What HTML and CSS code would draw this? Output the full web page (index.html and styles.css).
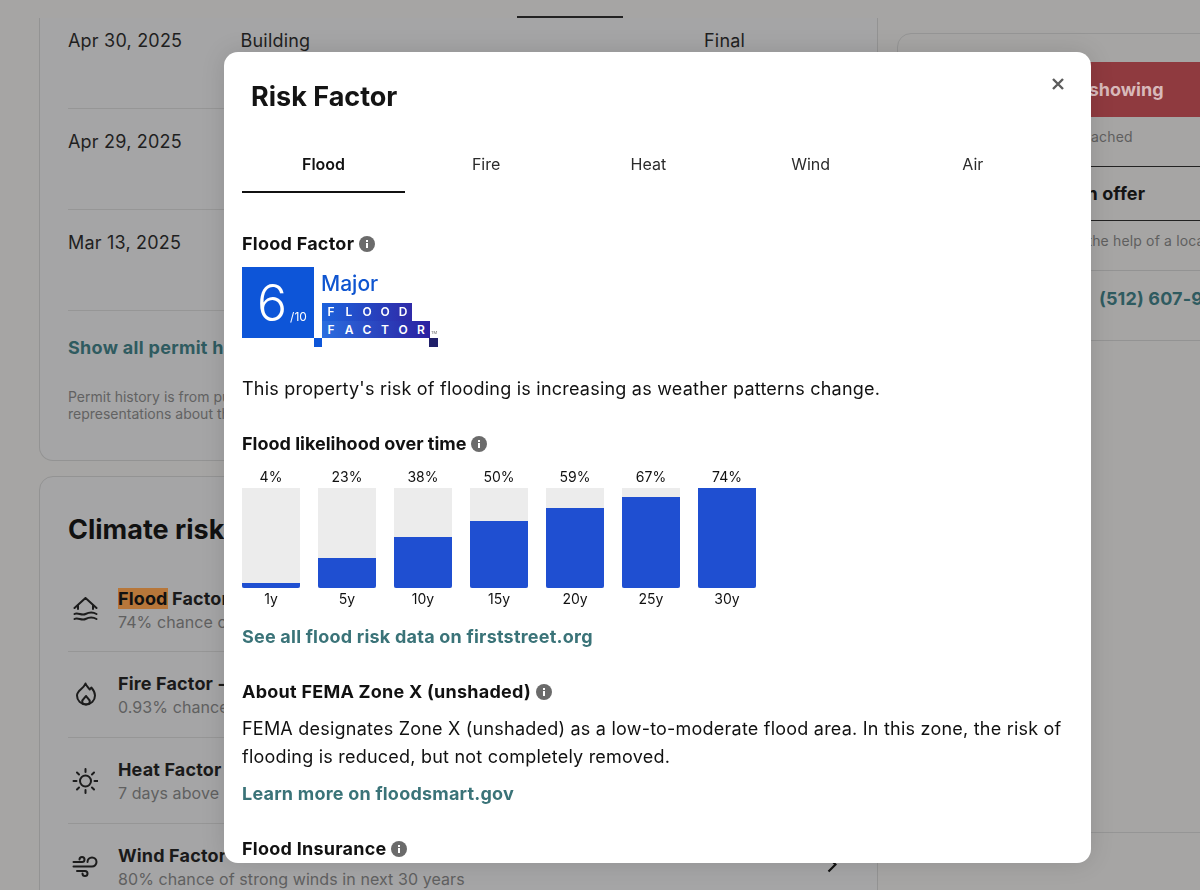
FILE: index.html
```html
<!DOCTYPE html>
<html lang="en">
<head>
<meta charset="utf-8">
<title>Risk Factor</title>
<link rel="stylesheet" href="styles.css">
</head>
<body>
<div class="page">
  <header class="topbar"><span class="tab-mark"></span></header>
  <main class="columns">
    <div class="left">
      <section class="card permits">
        <div class="permit first"><span>Apr 30, 2025</span><span>Building</span><span>Final</span></div>
        <div class="permit"><span>Apr 29, 2025</span><span>Building</span><span>Final</span></div>
        <div class="permit"><span>Mar 13, 2025</span><span>Building</span><span>Final</span></div>
        <a class="show-all">Show all permit history</a>
        <p class="note">Permit history is from public records and we make no<br>representations about their accuracy.</p>
      </section>
      <section class="card climate">
        <h2>Climate risks</h2>
        <div class="risk">
          <svg class="risk-icon" viewBox="0 0 26 26"><path d="M2.500 11 13.500 1l11 10M6 8.500V12M21 8.500V12"/><path d="M2.500 17c3.500-2 7 2 11 0s7.500-2 11 0M2.500 22c3.500-2 7 2 11 0s7.500-2 11 0"/></svg>
          <div><div class="risk-title"><mark>Flood</mark> Factor - Major</div><div class="risk-sub">74% chance of flooding in next 30 years</div></div>
        </div>
        <div class="risk">
          <svg class="risk-icon" viewBox="0 0 26 26"><path d="M13.500 1.500c1 2.800 2.800 4.300 4.300 6l1.500-2c2.200 2.500 3.700 5 3.700 8 0 5-4 9-9 9s-9-4-9-9c0-5 6.500-6.500 8.500-12z"/><path d="M14 14c1 2 3.800 3.300 3.800 5.300 0 1.800-1.700 3.200-3.800 3.200s-3.800-1.400-3.800-3.200c0-2 2.800-3.300 3.800-5.300z"/></svg>
          <div><div class="risk-title">Fire Factor - Minor</div><div class="risk-sub">0.93% chance of wildfire in next 30 years</div></div>
        </div>
        <div class="risk">
          <svg class="risk-icon" viewBox="0 0 26 26"><circle cx="13.500" cy="13" r="5.500"/><path d="M13.500 1v3M13.500 22v3M1.500 13h3M22.500 13h3M5 4.500 7 6.500M20 19.500l2 2M22 4.500 20 6.500M7 19.500l-2 2"/></svg>
          <div><div class="risk-title">Heat Factor - Severe</div><div class="risk-sub">7 days above 103° expected this year</div></div>
        </div>
        <div class="risk">
          <svg class="risk-icon" viewBox="0 0 26 26"><path d="M1.500 8H10a2.500 2.500 0 1 0-2.500-2.500M1.500 12.500H20a4.500 4.500 0 1 0-4.500-4.500M5 17h8a2.500 2.500 0 1 1-2.500 2.500"/></svg>
          <div><div class="risk-title">Wind Factor - Moderate</div><div class="risk-sub">80% chance of strong winds in next 30 years</div></div>
          <svg class="chev" viewBox="0 0 10 17"><path d="M1.500 1.500l7 7-7 7"/></svg>
        </div>
      </section>
    </div>
    <aside class="side">
      <div class="contact">
        <button class="request">Request a showing</button>
        <p class="side-small reached">Agent reached</p>
        <div class="offer">Make an offer</div>
        <p class="side-small help">Write a strong offer with the help of a local agent</p>
        <div class="phone">(512) 607-9000</div>
      </div>
    </aside>
  </main>
</div>

<div class="modal" role="dialog">
  <h1>Risk Factor</h1>
  <svg class="close" viewBox="0 0 14 14"><path d="M2 2l10 10M12 2 2 12"/></svg>
  <nav class="tabs">
    <span class="active">Flood</span><span>Fire</span><span>Heat</span><span>Wind</span><span>Air</span>
  </nav>

  <h3 class="head-factor">Flood Factor <svg class="info" viewBox="0 0 16 16"><circle cx="8" cy="8" r="8"/><rect x="7" y="7" width="2" height="5"/><rect x="7" y="4" width="2" height="2"/></svg></h3>

  <div class="badge">
    <div class="score"><span class="six">6</span><span class="ten">/10</span></div>
    <div class="badge-right">
      <div class="level">Major</div>
      <div class="ff">
        <div class="ff-row"><span>F</span><span>L</span><span>O</span><span>O</span><span>D</span></div>
        <div class="ff-row"><span>F</span><span>A</span><span>C</span><span>T</span><span>O</span><span>R</span><small class="tm">TM</small></div>
      </div>
    </div>
    <div class="feet"><i class="foot-a"></i><i class="foot-b"></i></div>
  </div>

  <p class="summary">This property's risk of flooding is increasing as weather patterns change.</p>

  <h3 class="head-chart">Flood likelihood over time <svg class="info" viewBox="0 0 16 16"><circle cx="8" cy="8" r="8"/><rect x="7" y="7" width="2" height="5"/><rect x="7" y="4" width="2" height="2"/></svg></h3>
  <div class="chart">
    <div class="bar"><span class="val">4%</span><div class="track"><div class="fill" style="height:5%"></div></div><span class="yr">1y</span></div>
    <div class="bar"><span class="val">23%</span><div class="track"><div class="fill" style="height:30%"></div></div><span class="yr">5y</span></div>
    <div class="bar"><span class="val">38%</span><div class="track"><div class="fill" style="height:51%"></div></div><span class="yr">10y</span></div>
    <div class="bar"><span class="val">50%</span><div class="track"><div class="fill" style="height:67%"></div></div><span class="yr">15y</span></div>
    <div class="bar"><span class="val">59%</span><div class="track"><div class="fill" style="height:80%"></div></div><span class="yr">20y</span></div>
    <div class="bar"><span class="val">67%</span><div class="track"><div class="fill" style="height:91%"></div></div><span class="yr">25y</span></div>
    <div class="bar"><span class="val">74%</span><div class="track"><div class="fill" style="height:100%"></div></div><span class="yr">30y</span></div>
  </div>
  <a class="link link-street">See all flood risk data on firststreet.org</a>

  <h3 class="head-fema">About FEMA Zone X (unshaded) <svg class="info" viewBox="0 0 16 16"><circle cx="8" cy="8" r="8"/><rect x="7" y="7" width="2" height="5"/><rect x="7" y="4" width="2" height="2"/></svg></h3>
  <p class="fema">FEMA designates Zone X (unshaded) as a low-to-moderate flood area. In this zone, the risk of flooding is reduced, but not completely removed.</p>
  <a class="link link-smart">Learn more on floodsmart.gov</a>

  <h3 class="head-ins">Flood Insurance <svg class="info" viewBox="0 0 16 16"><circle cx="8" cy="8" r="8"/><rect x="7" y="7" width="2" height="5"/><rect x="7" y="4" width="2" height="2"/></svg></h3>
</div>
</body>
</html>
```
FILE: styles.css
```css
* { box-sizing: border-box; }
html, body { margin: 0; height: 100%; }
body {
  background: #a6a5a4;
  font-family: Inter, "Liberation Sans", sans-serif;
  color: #1a1a1a;
  overflow: hidden;
}
.page { height: 890px; overflow: hidden; }

.topbar { height: 18px; padding-left: 517px; display: flex; align-items: flex-end; }
.tab-mark { width: 106px; height: 2px; background: #222; }

.columns { display: flex; align-items: flex-start; gap: 19px; padding-left: 39px; }
.left { width: 839px; flex: none; display: flex; flex-direction: column; gap: 15px; }
.card { border: 1px solid #939393; background: #a5a5a6; border-radius: 14px; }

.permits { border-top: 0; border-radius: 0 0 14px 14px; height: 443px; padding-left: 28px; padding-right: 28px; }
.permit {
  display: grid; grid-template-columns: 172.500px 463.500px 1fr;
  height: 101px; padding-top: 21px; font-size: 18px; line-height: 24px; letter-spacing: .2px;
  border-bottom: 1px solid #969696; color: #1f1f1f;
}
.permit.first { height: 91px; padding-top: 11px; }
.show-all { display: block; margin-top: 25px; font-size: 18px; line-height: 24px; font-weight: 700; letter-spacing: .3px; color: #2f5b60; }
.note { margin: 28px 0 0; font-size: 14px; line-height: 17px; color: #626262; }

.climate { height: 500px; padding: 36px 28px 0; }
.climate h2 { margin: 0 0 22px; font-size: 27px; line-height: 34px; font-weight: 700; color: #111; }
.risk {
  display: flex; align-items: center; gap: 20px; height: 86px; padding-left: 4px;
  border-bottom: 1px solid #969696; position: relative;
}
.risk:first-of-type { height: 83px; }
.risk-icon { width: 26px; height: 26px; flex: none; fill: none; stroke: #1c1c1c; stroke-width: 2; stroke-linecap: round; stroke-linejoin: round; }
.risk-title { font-size: 18px; line-height: 24px; font-weight: 700; letter-spacing: .15px; color: #1a1a1a; }
.risk-title mark { background: #b7773a; color: #111; }
.risk-sub { font-size: 16px; line-height: 22px; letter-spacing: .08px; color: #606060; }
.chev { position: absolute; right: 12px; top: 32px; width: 10px; height: 17px; fill: none; stroke: #111; stroke-width: 2.200; }

.side { width: 372px; flex: none; padding-top: 15px; }
.contact { border: 1px solid #959595; border-radius: 14px; padding: 28px 19px 0; height: 800px; }
.request {
  display: block; width: 100%; height: 55px; border: 0; padding: 0 5px 0 0; background: #8f3a3f; color: #d8b9ba;
  font: 700 18px/24px Inter, "Liberation Sans", sans-serif;
}
.side-small { margin: 0; font-size: 14px; line-height: 20px; letter-spacing: .15px; color: #5f5f5f; text-align: center; }
.reached { padding: 10px 0 19px; border-bottom: 1px solid #222; }
.offer { height: 54px; line-height: 54px; text-align: center; font-size: 18px; font-weight: 700; letter-spacing: .15px; padding-left: 2px; color: #141414; border-bottom: 1px solid #222; }
.help { height: 50px; padding: 10px 0 0 3px; border-bottom: 1px solid #939393; text-align: left; white-space: nowrap; }
.phone { height: 70px; line-height: 56px; padding-left: 182px; white-space: nowrap; font-size: 18px; font-weight: 700; letter-spacing: .15px; color: #2f5b60; border-bottom: 1px solid #939393; }

.modal {
  position: fixed; left: 224px; top: 52px; width: 867px; height: 811px;
  background: #fff; border-radius: 14px; overflow: hidden;
  padding: 0 20px 0 18px; color: #111;
  box-shadow: 0 0 24px rgba(0, 0, 0, .12);
}
.modal h1 { margin: 28px 0 0 9px; font-size: 27px; line-height: 34px; font-weight: 700; color: #141414; }
.close { position: absolute; right: 26px; top: 25px; width: 14px; height: 14px; fill: none; stroke: #5c5c5c; stroke-width: 2.400; }
.tabs { display: grid; grid-template-columns: 163px repeat(4, 162.250px); margin-top: 39px; width: 812px; }
.tabs span { height: 40px; text-align: center; font-size: 16px; line-height: 22px; color: #2b2b2b; }
.tabs .active { font-weight: 600; color: #111; border-bottom: 2px solid #111; }

h3 { margin: 0; font-size: 18px; line-height: 24px; font-weight: 700; letter-spacing: .25px; color: #111; display: flex; align-items: center; gap: 5px; }
.info { width: 16px; height: 16px; fill: #6b6b6b; }
.info rect { fill: #fff; }
.head-factor { margin-top: 39px; }

.badge { display: grid; grid-template-columns: 72px 1fr; width: 200px; margin-top: 11px; }
.score { height: 71px; background: #0d55d8; color: #fff; display: flex; align-items: baseline; padding: 5px 0 0 15px; }
.six { font-size: 50px; line-height: 62px; font-weight: 300; }
.ten { font-size: 12px; margin-left: 3px; }
.badge-right { padding-left: 8px; }
.level { font-size: 21px; line-height: 26px; font-weight: 500; color: #0f55d0; margin: 4px 0 0 -1px; }
.ff { margin-top: 6px; }
.ff-row { display: flex; height: 18px; width: 90px; background: linear-gradient(90deg, #1c62dc, #2f2aa8); }
.ff-row + .ff-row { width: 108px; background: linear-gradient(90deg, #2a6ee0, #2b1fa0); height: 17px; position: relative; }
.ff-row span { width: 18px; text-align: center; font: 600 12px/18px Inter, sans-serif; color: #fff; }
.tm { position: absolute; left: 109px; top: 9px; font-size: 4px; line-height: 5px; color: #666; }
.feet { grid-column: 1 / -1; position: relative; height: 9px; }
.foot-a { position: absolute; left: 72px; width: 8px; height: 9px; background: #0d55d8; }
.foot-b { position: absolute; left: 187px; width: 9px; height: 9px; background: #20206a; }

.summary { margin: 28px 0 0; font-size: 18px; line-height: 28px; letter-spacing: .22px; color: #111; }
.head-chart { margin-top: 29px; letter-spacing: 0; }
.chart { display: flex; gap: 18px; margin-top: 10px; }
.bar { width: 58px; display: flex; flex-direction: column; align-items: center; font-size: 14px; }
.val, .yr { line-height: 22px; height: 22px; color: #111; }
.track { width: 58px; height: 100px; background: #ececec; display: flex; align-items: flex-end; }
.fill { width: 100%; background: #1f4fd1; border-radius: 0 0 2px 2px; }
.link { display: block; font-size: 18px; line-height: 24px; font-weight: 700; letter-spacing: .22px; color: #3a7378; }
.link-street { margin-top: 15px; }
.head-fema { margin-top: 31px; }
.fema { margin: 11px 0 0; font-size: 18px; line-height: 28px; letter-spacing: .22px; }
.link-smart { margin-top: 11px; }
.head-ins { margin-top: 31px; }
```
